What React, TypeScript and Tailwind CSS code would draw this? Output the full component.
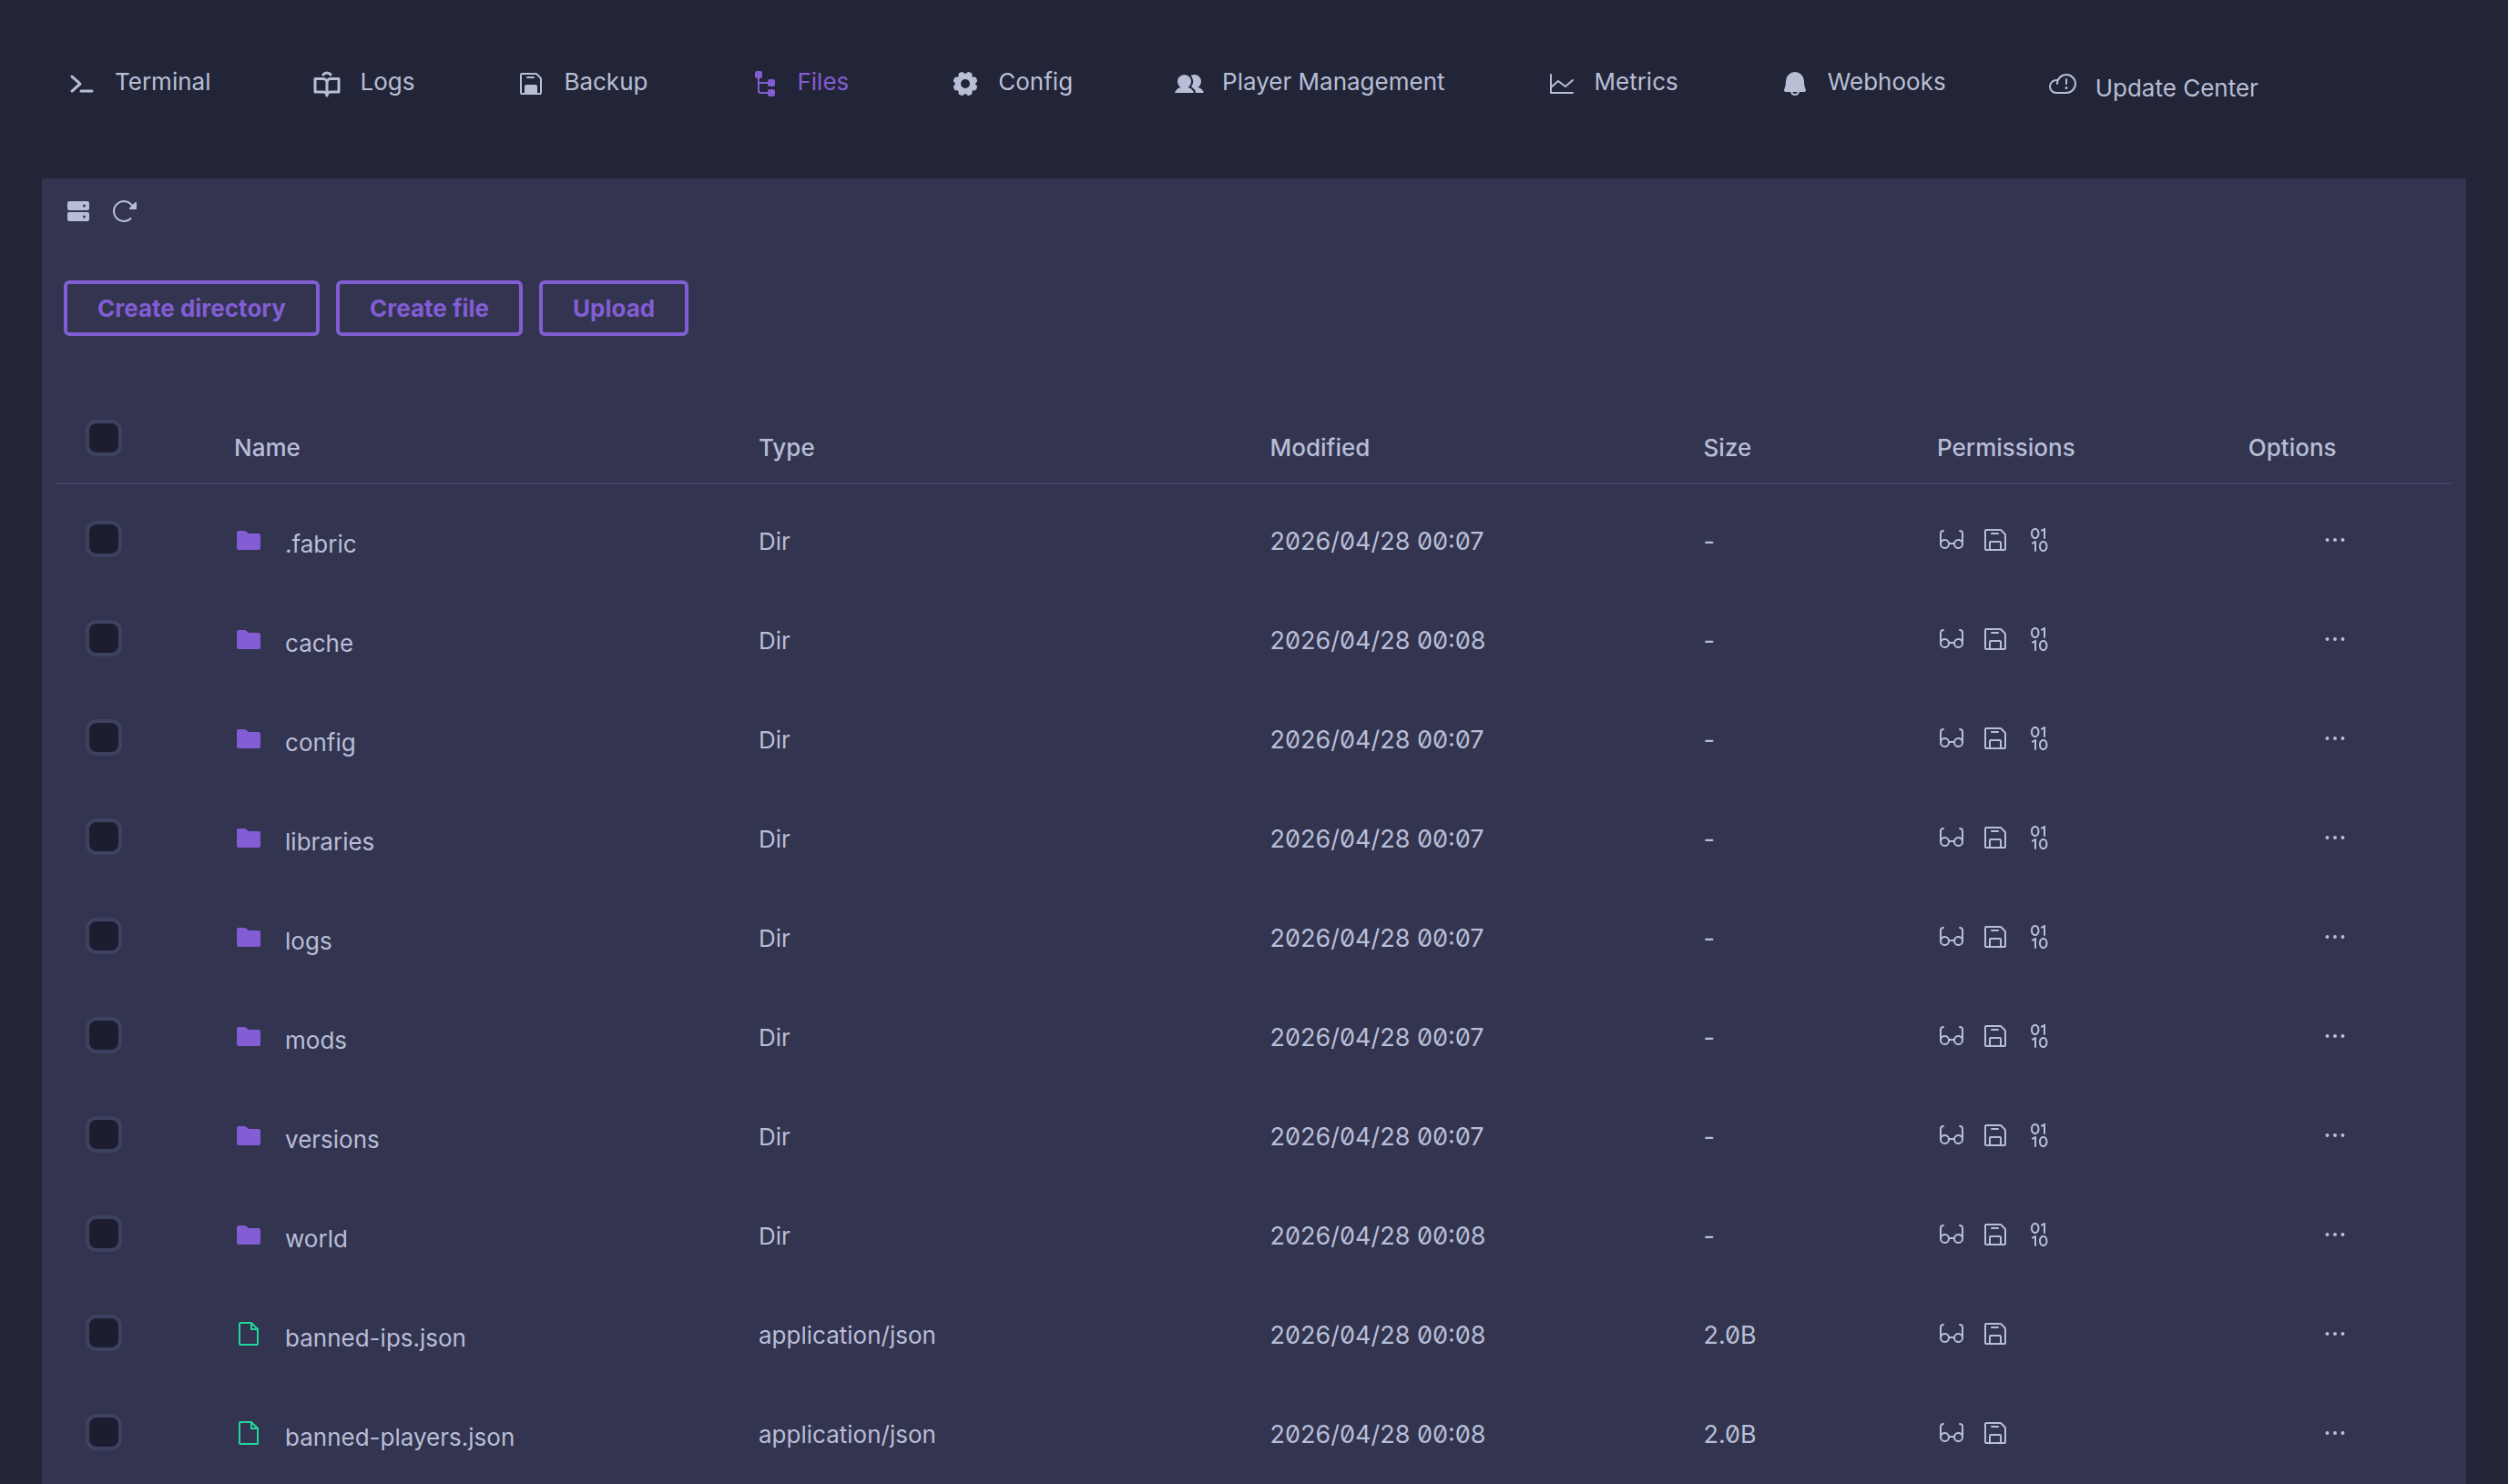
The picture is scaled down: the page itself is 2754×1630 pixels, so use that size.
import type { IconType } from "react-icons";
import {
  PiArrowClockwiseFill,
  PiBellFill,
  PiBinary,
  PiBookOpenUserBold,
  PiChartLine,
  PiCloudWarning,
  PiDotsThreeBold,
  PiEyeglasses,
  PiFile,
  PiFloppyDisk,
  PiFloppyDiskFill,
  PiFolderSimpleFill,
  PiGearFill,
  PiHardDrivesFill,
  PiTerminalBold,
  PiTreeViewFill,
  PiUsersFill,
} from "react-icons/pi";

type NavItem = { label: string; icon: IconType; active?: boolean; low?: boolean };

const navItems: NavItem[] = [
  { label: "Terminal", icon: PiTerminalBold },
  { label: "Logs", icon: PiBookOpenUserBold },
  { label: "Backup", icon: PiFloppyDiskFill },
  { label: "Files", icon: PiTreeViewFill, active: true },
  { label: "Config", icon: PiGearFill },
  { label: "Player Management", icon: PiUsersFill },
  { label: "Metrics", icon: PiChartLine },
  { label: "Webhooks", icon: PiBellFill },
  { label: "Update Center", icon: PiCloudWarning, low: true },
];

type Entry = { name: string; dir: boolean; modified: string };

const entries: Entry[] = [
  { name: ".fabric", dir: true, modified: "2026/04/28 00:07" },
  { name: "cache", dir: true, modified: "2026/04/28 00:08" },
  { name: "config", dir: true, modified: "2026/04/28 00:07" },
  { name: "libraries", dir: true, modified: "2026/04/28 00:07" },
  { name: "logs", dir: true, modified: "2026/04/28 00:07" },
  { name: "mods", dir: true, modified: "2026/04/28 00:07" },
  { name: "versions", dir: true, modified: "2026/04/28 00:07" },
  { name: "world", dir: true, modified: "2026/04/28 00:08" },
  { name: "banned-ips.json", dir: false, modified: "2026/04/28 00:08" },
  { name: "banned-players.json", dir: false, modified: "2026/04/28 00:08" },
];

function NavBar() {
  return (
    <nav className="flex h-[196px] items-center gap-28 pb-3 pl-[74px]">
      {navItems.map(({ label, icon: Icon, active, low }) => (
        <a
          key={label}
          href="#"
          aria-current={active ? "page" : undefined}
          className={`flex items-center gap-5 whitespace-nowrap ${active ? "text-[#825dd3]" : ""}`}
        >
          <Icon className="size-8" />
          <span className={low ? "pt-[10px]" : "pb-1"}>{label}</span>
        </a>
      ))}
    </nav>
  );
}

function OutlineButton({ label }: { label: string }) {
  return (
    <button
      type="button"
      className="h-[61px] rounded-md border-4 border-[#825dd3] px-[33px] pt-px font-bold text-[#825dd3]"
    >
      {label}
    </button>
  );
}

function Checkbox({ label }: { label: string }) {
  return (
    <input
      type="checkbox"
      aria-label={label}
      className="block size-10 appearance-none rounded-xl border-4 border-[#3e4261] bg-[#1c1e30] checked:bg-[#825dd3]"
    />
  );
}

const headCell =
  "h-[83px] border-b-2 border-[#404363] pb-[18px] pl-8 text-left align-bottom font-medium";

function FileRow({ entry }: { entry: Entry }) {
  return (
    <tr className="h-[109px]">
      <td className="pt-[10px] pl-8">
        <Checkbox label={`Select ${entry.name}`} />
      </td>
      <td className="pt-3 pl-8">
        <div className="flex items-center gap-6">
          {entry.dir ? (
            <PiFolderSimpleFill className="size-8 text-[#825dd3]" />
          ) : (
            <PiFile className="size-8 text-[#1fd79a]" />
          )}
          <span className="pt-[10px]">{entry.name}</span>
        </div>
      </td>
      <td className="pt-4 pl-8">{entry.dir ? "Dir" : "application/json"}</td>
      <td className="pt-4 pl-8 text-[27px] slashed-zero">{entry.modified}</td>
      <td className="pt-4 pl-8 text-[27px] slashed-zero">{entry.dir ? "-" : "2.0B"}</td>
      <td className="pt-3 pl-8">
        <div className="flex gap-4">
          <PiEyeglasses className="size-8" title="Read" />
          <PiFloppyDisk className="size-8" title="Write" />
          {entry.dir && <PiBinary className="size-8" title="Execute" />}
        </div>
      </td>
      <td className="pt-3">
        <button type="button" aria-label={`Options for ${entry.name}`} className="mx-auto block">
          <PiDotsThreeBold className="size-8" />
        </button>
      </td>
    </tr>
  );
}

export default function App() {
  return (
    <div className="flex min-h-screen flex-col bg-[#222537] font-[Inter,sans-serif] text-[26px] leading-10 text-[#b8bed6]">
      <NavBar />
      <main className="mx-[46px] flex-1 bg-[#333450] px-4 pt-5">
        <div className="flex gap-[18px] px-2">
          <button type="button" aria-label="Server files">
            <PiHardDrivesFill className="size-8" />
          </button>
          <button type="button" aria-label="Refresh">
            <PiArrowClockwiseFill className="size-8" />
          </button>
        </div>
        <div className="mt-[60px] flex gap-[18px] px-2">
          <OutlineButton label="Create directory" />
          <OutlineButton label="Create file" />
          <OutlineButton label="Upload" />
        </div>
        <table className="mt-20 w-full table-fixed border-separate border-spacing-0">
          <colgroup>
            <col className="w-[6.2%]" />
            <col className="w-[21.9%]" />
            <col className="w-[21.35%]" />
            <col className="w-[18.1%]" />
            <col className="w-[9.75%]" />
            <col className="w-[13%]" />
            <col className="w-[9.7%]" />
          </colgroup>
          <thead>
            <tr>
              <th className="border-b-2 border-[#404363] pb-[29px] pl-8 align-bottom">
                <Checkbox label="Select all" />
              </th>
              <th className={headCell}>Name</th>
              <th className={headCell}>Type</th>
              <th className={headCell}>Modified</th>
              <th className={headCell}>Size</th>
              <th className={headCell}>Permissions</th>
              <th className={headCell}>Options</th>
            </tr>
          </thead>
          <tbody>
            {entries.map((entry) => (
              <FileRow key={entry.name} entry={entry} />
            ))}
          </tbody>
        </table>
      </main>
    </div>
  );
}
